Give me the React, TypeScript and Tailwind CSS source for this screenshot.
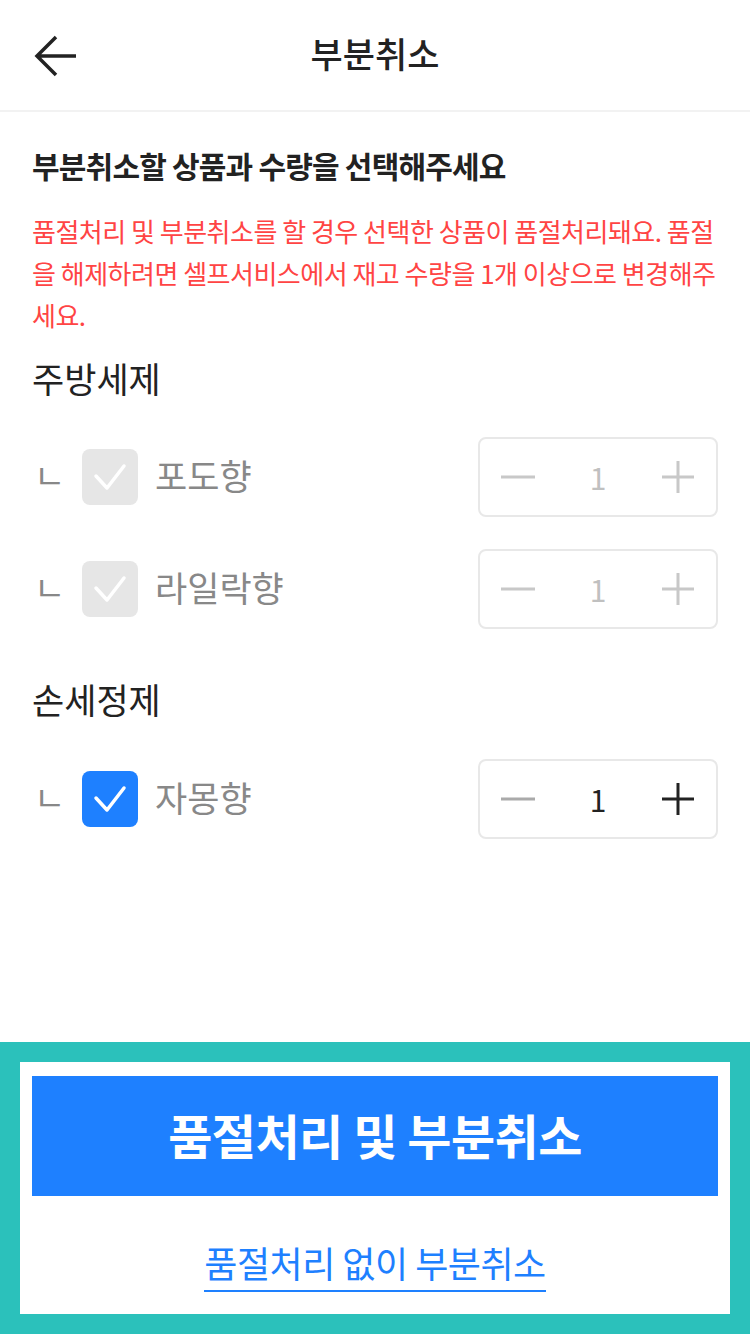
import { useState } from "react";

interface Item {
  id: string;
  name: string;
  qty: number;
  checked: boolean;
  disabled: boolean;
}

interface Group {
  title: string;
  items: Item[];
}

const initialGroups: Group[] = [
  {
    title: "주방세제",
    items: [
      { id: "grape", name: "포도향", qty: 1, checked: true, disabled: true },
      { id: "lilac", name: "라일락향", qty: 1, checked: true, disabled: true },
    ],
  },
  {
    title: "손세정제",
    items: [{ id: "musk", name: "자몽향", qty: 1, checked: true, disabled: false }],
  },
];

const font = { fontFamily: '"Noto Sans CJK KR", "Noto Sans", sans-serif' };

function Check({ checked, disabled }: { checked: boolean; disabled: boolean }) {
  return (
    <div
      className={`w-14 h-14 rounded-lg shrink-0 flex items-center justify-center ${
        disabled ? "bg-[#e6e6e6]" : checked ? "bg-[#1e80ff]" : "border-2 border-[#ddd] bg-white"
      }`}
    >
      {checked && (
        <svg className="w-14 h-14" viewBox="0 0 56 56" fill="none">
          <path d="M14 27 L25 39 L42 17" stroke="#fff" strokeWidth={3.5} strokeLinecap="round" strokeLinejoin="round" />
        </svg>
      )}
    </div>
  );
}

function Stepper({ qty, disabled }: { qty: number; disabled: boolean }) {
  const sign = disabled ? "#c8c8c8" : "#222";
  return (
    <div className="w-[240px] h-20 border-2 border-[#e8e8e8] rounded-lg flex items-center justify-between px-5">
      <svg width="36" height="36" viewBox="0 0 36 36">
        <path d="M1 18 H35" stroke={disabled ? "#c8c8c8" : "#aaa"} strokeWidth={3} />
      </svg>
      <span className={`text-[30px] leading-none ${disabled ? "text-[#c0c0c0]" : "text-[#222]"}`}>{qty}</span>
      <svg width="36" height="36" viewBox="0 0 36 36">
        <path d="M2 18 H34 M18 2 V34" stroke={sign} strokeWidth={3} />
      </svg>
    </div>
  );
}

export default function App() {
  const [groups] = useState<Group[]>(initialGroups);

  return (
    <div className="w-[750px] h-[1334px] bg-white flex flex-col" style={font}>
      {/* Header */}
      <div className="h-[112px] shrink-0 border-b-2 border-[#f2f2f2] flex items-center justify-center relative">
        <svg className="absolute left-[34px] top-[35px]" width="44" height="42" viewBox="0 0 44 42" fill="none">
          <path d="M22 2 L3 21 L22 40 M3 21 H42" stroke="#222" strokeWidth={3.5} />
        </svg>
        <h1 className="text-[35px] font-medium text-[#222] leading-none -mt-[6px]">부분취소</h1>
      </div>

      {/* Content */}
      <div className="flex-1 px-8">
        <p className="mt-[33px] text-[30px] leading-[40px] font-bold text-[#222] tracking-[-0.8px]">
          부분취소할 상품과 수량을 선택해주세요
        </p>
        <p className="mt-[25px] text-[26px] leading-[42px] text-[#ff4444] tracking-[-0.5px] whitespace-nowrap">
          품절처리 및 부분취소를 할 경우 선택한 상품이 품절처리돼요. 품절
          <br />
          을 해제하려면 셀프서비스에서 재고 수량을 1개 이상으로 변경해주
          <br />
          세요.
        </p>

        {groups.map((g, gi) => (
          <div key={g.title} className={gi === 0 ? "mt-[20px]" : "mt-[48px]"}>
            <h2 className="text-[35px] leading-[44px] text-[#222]">{g.title}</h2>
            <div className={`${gi === 0 ? "mt-[37px]" : "mt-[38px]"} flex flex-col gap-8`}>
              {g.items.map((item) => (
                <div key={item.id} className="h-20 flex items-center">
                  <span className="w-[50px] pl-[2px] text-[34px] text-[#888] leading-none -mt-[4px]">ㄴ</span>
                  <Check checked={item.checked} disabled={item.disabled} />
                  <span className="ml-[17px] flex-1 text-[35px] text-[#888] leading-none -mt-[6px]">{item.name}</span>
                  <Stepper qty={item.qty} disabled={item.disabled} />
                </div>
              ))}
            </div>
          </div>
        ))}
      </div>

      {/* Footer */}
      <div className="shrink-0 border-[20px] border-[#2bc1bb] bg-white px-3 pt-[14px]">
        <button className="w-full h-[120px] bg-[#1e80ff] text-white text-[48px] font-bold tracking-[-0.5px] pb-[4px]">
          품절처리 및 부분취소
        </button>
        <div className="h-[118px] flex items-start justify-center pt-[46px]">
          <span className="text-[36px] leading-[40px] pb-[8px] text-[#1e80ff] border-b-2 border-[#1e80ff] tracking-[-0.5px]">
            품절처리 없이 부분취소
          </span>
        </div>
      </div>
    </div>
  );
}
